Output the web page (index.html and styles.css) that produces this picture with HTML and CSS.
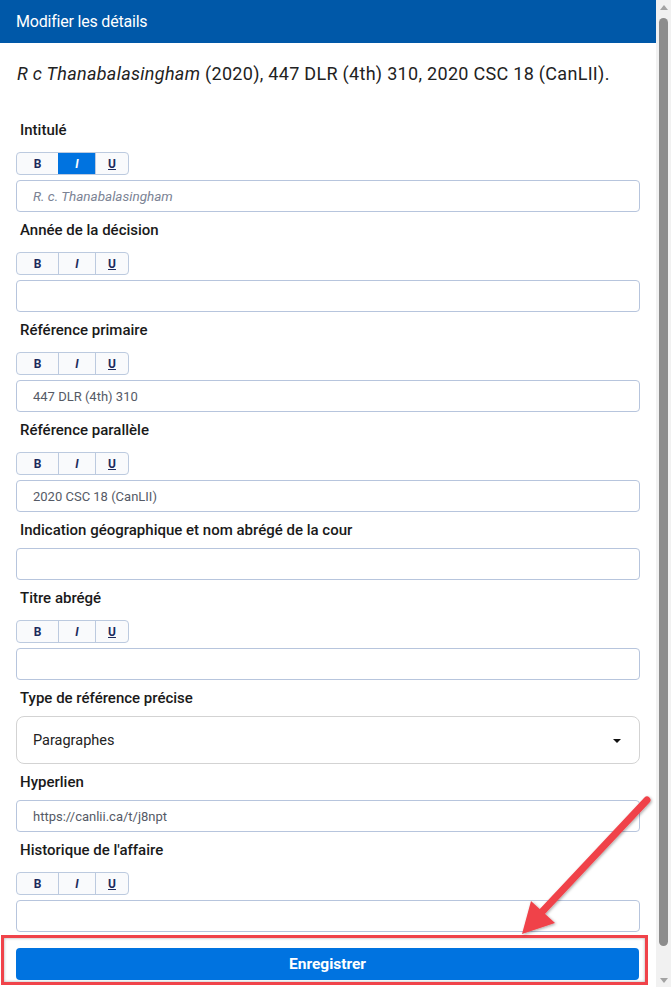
FILE: index.html
```html
<!DOCTYPE html>
<html lang="fr">
	<head>
		<meta charset="UTF-8">
		<title>Modifier les détails</title>
		<link rel="stylesheet" href="styles.css">
	</head>
	<body>
		<div class="window">
			<div class="main">
				<div class="header">Modifier les détails</div>
				<div class="body">
					<p class="citation"><i>R c Thanabalasingham</i> (2020), 447 DLR (4th) 310, 2020 CSC 18 (CanLII).</p>

					<div class="field">
						<label>Intitulé</label>
						<div class="toolbar">
							<span class="tb b">B</span><span class="tb i active">I</span><span class="tb u">U</span>
						</div>
						<div class="input placeholder">R. c. Thanabalasingham</div>
					</div>

					<div class="field">
						<label>Année de la décision</label>
						<div class="toolbar">
							<span class="tb b">B</span><span class="tb i">I</span><span class="tb u">U</span>
						</div>
						<div class="input"></div>
					</div>

					<div class="field">
						<label>Référence primaire</label>
						<div class="toolbar">
							<span class="tb b">B</span><span class="tb i">I</span><span class="tb u">U</span>
						</div>
						<div class="input">447 DLR (4th) 310</div>
					</div>

					<div class="field">
						<label>Référence parallèle</label>
						<div class="toolbar">
							<span class="tb b">B</span><span class="tb i">I</span><span class="tb u">U</span>
						</div>
						<div class="input">2020 CSC 18 (CanLII)</div>
					</div>

					<div class="field">
						<label>Indication géographique et nom abrégé de la cour</label>
						<div class="input"></div>
					</div>

					<div class="field">
						<label>Titre abrégé</label>
						<div class="toolbar">
							<span class="tb b">B</span><span class="tb i">I</span><span class="tb u">U</span>
						</div>
						<div class="input"></div>
					</div>

					<div class="field">
						<label>Type de référence précise</label>
						<div class="select">
							<span>Paragraphes</span>
							<span class="caret"></span>
						</div>
					</div>

					<div class="field">
						<label>Hyperlien</label>
						<div class="input">https://canlii.ca/t/j8npt</div>
					</div>

					<div class="field">
						<label>Historique de l'affaire</label>
						<div class="toolbar">
							<span class="tb b">B</span><span class="tb i">I</span><span class="tb u">U</span>
						</div>
						<div class="input"></div>
					</div>
				</div>
				<div class="footer">
					<button class="save">Enregistrer</button>
				</div>
			</div>

			<div class="scrollbar">
				<span class="sb-up"></span>
				<span class="sb-thumb"></span>
				<span class="sb-down"></span>
			</div>

			<!-- flèche d'annotation -->
			<svg class="arrow" width="671" height="987" viewBox="0 0 671 987">
				<defs>
					<filter id="sh" x="-20%" y="-20%" width="140%" height="140%">
						<feDropShadow dx="1" dy="1" stdDeviation="1.5" flood-color="#000" flood-opacity="0.35"/>
					</filter>
				</defs>
				<g filter="url(#sh)">
					<line x1="647" y1="800" x2="540" y2="914" stroke="#f0434a" stroke-width="7" stroke-linecap="round"/>
					<polygon points="522,934 531,901 555,923" fill="#f0434a"/>
				</g>
			</svg>
		</div>
	</body>
</html>
```

FILE: styles.css
```css
*{
	box-sizing: border-box;
}
html,body{
	margin: 0;
	padding: 0;
	height: 100%;
}
body{
	font-family: Roboto, "Liberation Sans", sans-serif;
	color: #1e1e1e;
	background: #fff;
	overflow: hidden;
}
.window{
	position: relative;
	display: flex;
	width: 671px;
	height: 987px;
}
.main{
	flex: 1;
	display: flex;
	flex-direction: column;
}
.main>div{
	flex-shrink: 0;
}
.header{
	height: 43px;
	background-color: #0058a8;
	color: #fff;
	font-size: 16px;
	letter-spacing: -0.2px;
	padding-left: 16px;
	display: flex;
	align-items: center;
}
.body{
	padding: 0 16px;
}
.citation{
	margin: 19px 0 33px 1px;
	font-size: 18px;
	letter-spacing: 0.3px;
	line-height: 24px;
	color: #222;
}
.field{
	display: flex;
	flex-direction: column;
	margin-bottom: 7px;
}
.field:last-child{
	margin-bottom: 0;
}
.field label{
	display: block;
	padding-left: 4px;
	padding-top: 1px;
	font-size: 15px;
	line-height: 20px;
	font-weight: 500;
	color: #1a1a1a;
	margin-bottom: 8px;
}
.toolbar{
	display: flex;
	width: 113px;
	height: 23px;
	margin-top: 4px;
	margin-bottom: 5px;
	border: 1px solid #bccadf;
	border-radius: 4px;
	background-color: #f9fafc;
	overflow: hidden;
}
.tb{
	display: flex;
	align-items: center;
	justify-content: center;
	font-size: 12px;
	font-weight: bold;
	color: #1c2a5c;
	border-left: 1px solid #bccadf;
}
.tb.b{
	width: 41px;
	border-left: none;
}
.tb.i{
	width: 37px;
	font-style: italic;
}
.tb.u{
	flex: 1;
	text-decoration: underline;
}
.tb.active{
	background-color: #0073e0;
	color: #fff;
	border-left-color: #0073e0;
}
.input{
	height: 32px;
	border: 1px solid #b7c5dd;
	border-radius: 4px;
	padding-left: 16px;
	display: flex;
	align-items: center;
	font-size: 13px;
	color: #555a66;
}
.input.placeholder{
	font-size: 13.5px;
	font-style: italic;
	color: #7b8394;
}
.select{
	height: 48px;
	border: 1px solid #d3d3d3;
	border-radius: 8px;
	padding: 0 18px 0 16px;
	display: flex;
	align-items: center;
	justify-content: space-between;
	font-size: 14.5px;
	color: #222;
}
.caret{
	width: 0;
	height: 0;
	border-left: 4px solid transparent;
	border-right: 4px solid transparent;
	border-top: 4px solid #111;
	margin-top: 2px;
}
.footer{
	margin: 3px 8px 0 1px;
	border: 3px solid #f0434a;
	padding: 10px 6px 2px 12px;
	box-shadow: inset 0 0 3px rgba(0,0,0,.35);
}
.save{
	display: block;
	width: 100%;
	height: 32px;
	border: none;
	border-radius: 4px;
	background-color: #0073e0;
	color: #fff;
	font-family: inherit;
	font-size: 15.5px;
	font-weight: bold;
}
.scrollbar{
	width: 15px;
	background-color: #f1f1f1;
	display: flex;
	flex-direction: column;
	align-items: center;
	padding: 5px 0 4px;
}
.sb-up,.sb-down{
	width: 0;
	height: 0;
	border-left: 4px solid transparent;
	border-right: 4px solid transparent;
}
.sb-up{
	border-bottom: 5px solid #a3a3a3;
}
.sb-down{
	border-top: 5px solid #a3a3a3;
	margin-top: auto;
}
.sb-thumb{
	width: 9px;
	height: 928px;
	margin-top: 8px;
	border-radius: 5px;
	background-color: #8c8c8c;
}
.arrow{
	position: absolute;
	left: 0;
	top: 0;
	pointer-events: none;
}
```
